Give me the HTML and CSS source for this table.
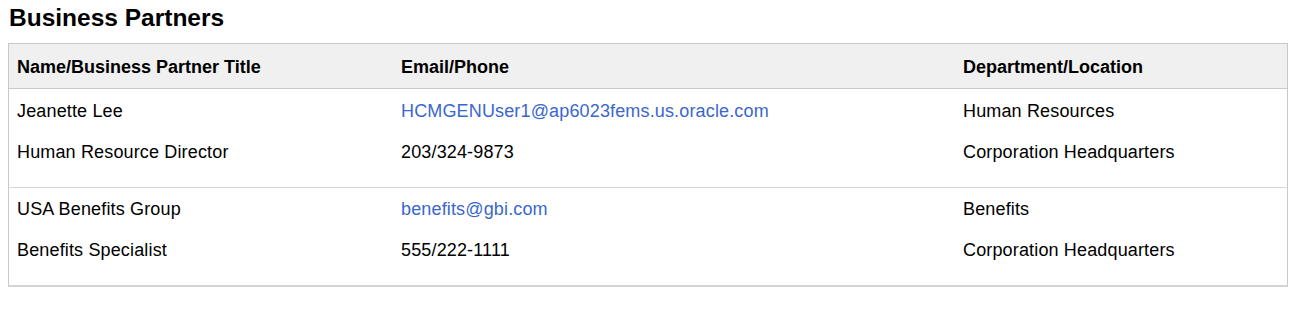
FILE: index.html
```html
<!DOCTYPE html>
<html lang="en">
<head>
    <meta charset="UTF-8">
    <title>Business Partners</title>
    <link rel="stylesheet" href="styles.css">
</head>
<body>
    <h1 class="page-title">Business Partners</h1>
    <table class="partners">
        <thead>
            <tr>
                <th class="col-name">Name/Business Partner Title</th>
                <th class="col-contact">Email/Phone</th>
                <th class="col-dept">Department/Location</th>
            </tr>
        </thead>
        <tbody>
            <tr>
                <td>
                    <div class="line">Jeanette Lee</div>
                    <div class="line second">Human Resource Director</div>
                </td>
                <td>
                    <div class="line"><a href="#">HCMGENUser1@ap6023fems.us.oracle.com</a></div>
                    <div class="line second">203/324-9873</div>
                </td>
                <td>
                    <div class="line">Human Resources</div>
                    <div class="line second">Corporation Headquarters</div>
                </td>
            </tr>
            <tr>
                <td>
                    <div class="line">USA Benefits Group</div>
                    <div class="line second">Benefits Specialist</div>
                </td>
                <td>
                    <div class="line"><a href="#">benefits@gbi.com</a></div>
                    <div class="line second">555/222-1111</div>
                </td>
                <td>
                    <div class="line">Benefits</div>
                    <div class="line second">Corporation Headquarters</div>
                </td>
            </tr>
        </tbody>
    </table>
</body>
</html>
```

FILE: styles.css
```css
body {
    margin: 8px;
    background-color: #ffffff;
    font-family: "Liberation Sans", Arial, sans-serif;
    color: #000000;
}
.page-title {
    margin: 0 0 16px 1px;
    font-size: 24.5px;
    line-height: 19px;
    font-weight: bold;
}
.partners {
    width: 1280px;
    border-collapse: collapse;
    table-layout: fixed;
    border: 1px solid #c8c8c8;
    border-bottom: 2px solid #d4d4d4;
    font-size: 18px;
}
.partners th {
    height: 42px;
    padding: 2px 8px 0;
    text-align: left;
    font-weight: bold;
    background-color: #f0f0f0;
    border-bottom: 1px solid #c8c8c8;
}
.col-name {
    width: 368px;
}
.col-contact {
    width: 546px;
}
.partners td {
    padding: 12px 8px 25px;
    vertical-align: top;
    letter-spacing: 0.15px;
}
.partners tbody tr + tr td {
    padding-top: 11px;
    border-top: 1px solid #d6d6d6;
}
.line {
    line-height: 20px;
}
.line.second {
    margin-top: 21px;
}
.partners a {
    color: #3a67cc;
    text-decoration: none;
}
```
